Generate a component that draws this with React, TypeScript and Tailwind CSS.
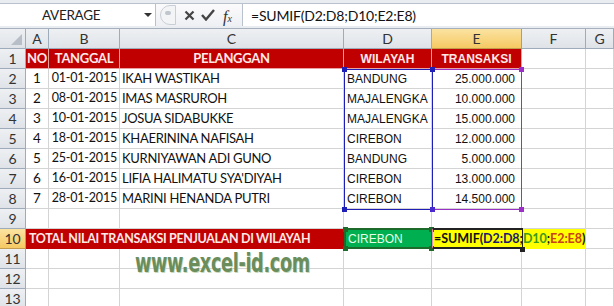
const CAL = "font-['Lato','Liberation_Sans',sans-serif]";
const ARI = "font-['Liberation_Sans',Arial,sans-serif]";

const rows = [
  ["1", "01-01-2015", "IKAH WASTIKAH", "BANDUNG", "25.000.000"],
  ["2", "08-01-2015", "IMAS MASRUROH", "MAJALENGKA", "10.000.000"],
  ["3", "10-01-2015", "JOSUA SIDABUKKE", "MAJALENGKA", "15.000.000"],
  ["4", "18-01-2015", "KHAERININA NAFISAH", "CIREBON", "12.000.000"],
  ["5", "25-01-2015", "KURNIYAWAN ADI GUNO", "BANDUNG", "5.000.000"],
  ["6", "16-01-2015", "LIFIA HALIMATU SYA'DIYAH", "CIREBON", "13.000.000"],
  ["7", "28-01-2015", "MARINI HENANDA PUTRI", "CIREBON", "14.500.000"],
];

const cols = "grid grid-cols-[26px_23px_71px_224px_88px_90px_64px_1fr]";
const cell = "h-[20px] border-r border-b border-[#d4d4d4] flex items-center overflow-hidden whitespace-nowrap";
const rowHead =
  "h-[20px] border-r border-b border-[#9eabba] bg-gradient-to-b from-[#eef0f3] to-[#dfe3e8] flex items-center justify-center text-[14px] text-[#333] " +
  CAL;

function Corner({ x, y, color }: { x: number; y: number; color: string }) {
  return (
    <div
      className="absolute w-[5px] h-[5px]"
      style={{ left: x - 2, top: y - 2, backgroundColor: color }}
    />
  );
}

export default function App() {
  return (
    <div className="w-[614px] h-[306px] overflow-hidden bg-white relative select-none">
      {/* Formula bar */}
      <div className="h-[29px] bg-[#e9ecf0] border-b border-[#a6b0bc] flex items-end pb-[2px]">
        <div className="flex w-full h-[23px] border-t border-[#b8c1cc]">
          <div className="w-[156px] bg-white border-r border-[#b8c1cc] flex items-center relative">
            <span className={"absolute left-[42px] text-[13.5px] tracking-[-0.3px] text-[#222] " + CAL}>AVERAGE</span>
            <span className="absolute left-[144px] top-[9px] w-0 h-0 border-l-[4px] border-r-[4px] border-t-[4px] border-l-transparent border-r-transparent border-t-[#333]" />
          </div>
          <div className="w-[87px] bg-gradient-to-b from-[#fbfbfc] to-[#eef0f3] flex items-center relative border-r border-[#b8c1cc]">
            <div className="absolute left-[4px] top-[1px] w-[16px] h-[20px] rounded-l-full border border-[#c9cfd6] bg-[#f3f4f6]" />
            <div className="absolute left-[9px] top-[7px] w-[6px] h-[4px] rounded-full bg-[#c0c6cd]" />
            <svg className="absolute left-[28px] top-[6px]" width="11" height="11" viewBox="0 0 11 11">
              <path d="M1.5 1.5 L9.5 9.5 M9.5 1.5 L1.5 9.5" stroke="#444" strokeWidth="2.2" />
            </svg>
            <svg className="absolute left-[45px] top-[5px]" width="14" height="12" viewBox="0 0 14 12">
              <path d="M1 6 L5 10.5 L13 1" stroke="#444" strokeWidth="2.4" fill="none" />
            </svg>
            <span className="absolute left-[67px] top-[1px] text-[16px] italic text-[#333] font-['Liberation_Serif',serif]">
              f<span className="text-[10px]">x</span>
            </span>
          </div>
          <div className={"flex-1 bg-white flex items-center pl-[8px] text-[14px] tracking-[-0.2px] text-[#111] " + CAL}>
            =SUMIF(D2:D8;D10;E2:E8)
          </div>
        </div>
      </div>

      {/* Sheet */}
      <div className="relative">
        {/* column header */}
        <div className={cols + " h-[20px] " + CAL}>
          <div className="h-[20px] bg-gradient-to-b from-[#eef0f3] to-[#dfe3e8] border-r border-b border-[#9eabba] relative">
            <svg className="absolute right-[3px] bottom-[3px]" width="11" height="11" viewBox="0 0 11 11">
              <path d="M11 0 L11 11 L0 11 Z" fill="#b7bec7" />
            </svg>
          </div>
          {["A", "B", "C", "D", "E", "F", "G"].map((c) => (
            <div
              key={c}
              className={
                "h-[20px] border-r border-b flex items-center justify-center text-[14px] " +
                (c === "E"
                  ? "bg-gradient-to-b from-[#fbe3a0] to-[#f5c962] border-[#c29b4d] text-[#333]"
                  : "bg-gradient-to-b from-[#eef0f3] to-[#dfe3e8] border-[#9eabba] text-[#333]")
              }
            >
              {c}
            </div>
          ))}
        </div>

        {/* row 1 */}
        <div className={cols}>
          <div className={rowHead}>1</div>
          {["NO", "TANGGAL", "PELANGGAN"].map((t) => (
            <div
              key={t}
              className={cell + " justify-center bg-[#c00000] border-[#e8a0a0] text-[#ffe8e8] font-bold text-[13px] tracking-[-0.3px] " + CAL}
            >
              {t}
            </div>
          ))}
          {["WILAYAH", "TRANSAKSI"].map((t) => (
            <div
              key={t}
              className={cell + " justify-center bg-[#c00000] border-[#e8a0a0] text-[#ffe8e8] font-bold text-[12px] " + ARI}
            >
              {t}
            </div>
          ))}
          <div className={cell} />
          <div className={cell} />
        </div>

        {/* data rows */}
        {rows.map((r, i) => (
          <div key={i} className={cols}>
            <div className={rowHead}>{i + 2}</div>
            <div className={cell + " justify-center border-[#a6a6a6] text-[13.5px] text-[#111] " + CAL}>{r[0]}</div>
            <div className={cell + " justify-end pr-[2px] border-[#a6a6a6] text-[12.5px] tracking-[-0.2px] text-[#111] " + CAL}>{r[1]}</div>
            <div className={cell + " pl-[2px] border-[#a6a6a6] text-[13px] tracking-[-0.3px] text-[#111] " + CAL}>{r[2]}</div>
            <div className={cell + " pl-[3px] border-[#a6a6a6] text-[12px] text-[#111] " + ARI}>{r[3]}</div>
            <div className={cell + " justify-end pr-[6px] border-[#a6a6a6] text-[12px] text-[#111] " + ARI}>{r[4]}</div>
            <div className={cell} />
            <div className={cell} />
          </div>
        ))}

        {/* row 9 */}
        <div className={cols}>
          <div className={rowHead}>9</div>
          {[0, 1, 2, 3, 4, 5, 6].map((k) => (
            <div key={k} className={cell} />
          ))}
        </div>

        {/* row 10 */}
        <div className={cols}>
          <div
            className={
              "h-[20px] border-r border-b border-[#c29b4d] bg-gradient-to-b from-[#fbe3a0] to-[#f5c962] flex items-center justify-center text-[14px] text-[#333] " +
              CAL
            }
          >
            10
          </div>
          <div className={"col-span-3 h-[20px] bg-[#c00000] flex items-center pl-[3px] text-[12.5px] tracking-[-0.35px] font-bold text-[#ffe8e8] whitespace-nowrap " + CAL}>
            TOTAL NILAI TRANSAKSI PENJUALAN DI WILAYAH
          </div>
          <div className={"h-[20px] bg-[#00b050] flex items-center pl-[4px] text-[12px] text-[#e6ffe6] " + ARI}>
            CIREBON
          </div>
          <div className={"col-span-2 h-[20px] bg-[#ffff00] flex items-center pl-[2px] text-[12.5px] tracking-[-0.05px] font-bold text-[#111] whitespace-nowrap " + CAL}>
            =SUMIF(<span className="text-[#1b1b6b]">D2:D8</span>;<span className="text-[#3c9a1e]">D10</span>;
            <span className="text-[#c8401c]">E2:E8</span>)<span className="inline-block w-[1px] h-[15px] bg-black ml-[1px]" />
          </div>
          <div className={cell} />
        </div>

        {/* rows 11-13 */}
        {[11, 12, 13].map((n) => (
          <div key={n} className={cols}>
            <div className={rowHead}>{n}</div>
            {[0, 1, 2, 3, 4, 5, 6].map((k) => (
              <div key={k} className={cell} />
            ))}
          </div>
        ))}

        {/* range highlights */}
        <div className="absolute left-[344px] top-[40px] w-[89px] h-[141px] border border-[#1f1fb8]" />
        <div className="absolute left-[432px] top-[40px] w-[90px] h-[141px] border border-[#9b30c8] border-l-0" />
        <Corner x={344} y={40} color="#1f1fb8" />
        <Corner x={432} y={40} color="#1f1fb8" />
        <Corner x={344} y={180} color="#1f1fb8" />
        <Corner x={432} y={180} color="#4a2ad0" />
        <Corner x={521} y={40} color="#9b30c8" />
        <Corner x={521} y={180} color="#9b30c8" />

        <div className="absolute left-[344px] top-[199px] w-[89px] h-[21px] border-2 border-[#1d6b2a]" />
        <Corner x={345} y={200} color="#1d6b2a" />
        <Corner x={431} y={200} color="#1d6b2a" />
        <Corner x={345} y={219} color="#1d6b2a" />
        <Corner x={431} y={219} color="#1d6b2a" />

        {/* active cell */}
        <div className="absolute left-[432px] top-[199px] w-[91px] h-[21px] border-t-2 border-b-2 border-r border-l border-t-[#222] border-b-[#222] border-r-[#222] border-l-[#e88fb0]" />
        <div className="absolute left-[520px] top-[218px] w-[5px] h-[5px] bg-[#222]" />

        {/* watermark */}
        <div className="absolute left-[135px] top-[214px] text-[27px] font-bold tracking-[-0.5px] text-[#6a8d5b] font-['DejaVu_Sans_Condensed','DejaVu_Sans',sans-serif] scale-x-[0.73] origin-left [text-shadow:1px_1px_0_#c9dbbf]">
          www.excel-id.com
        </div>
      </div>
    </div>
  );
}
